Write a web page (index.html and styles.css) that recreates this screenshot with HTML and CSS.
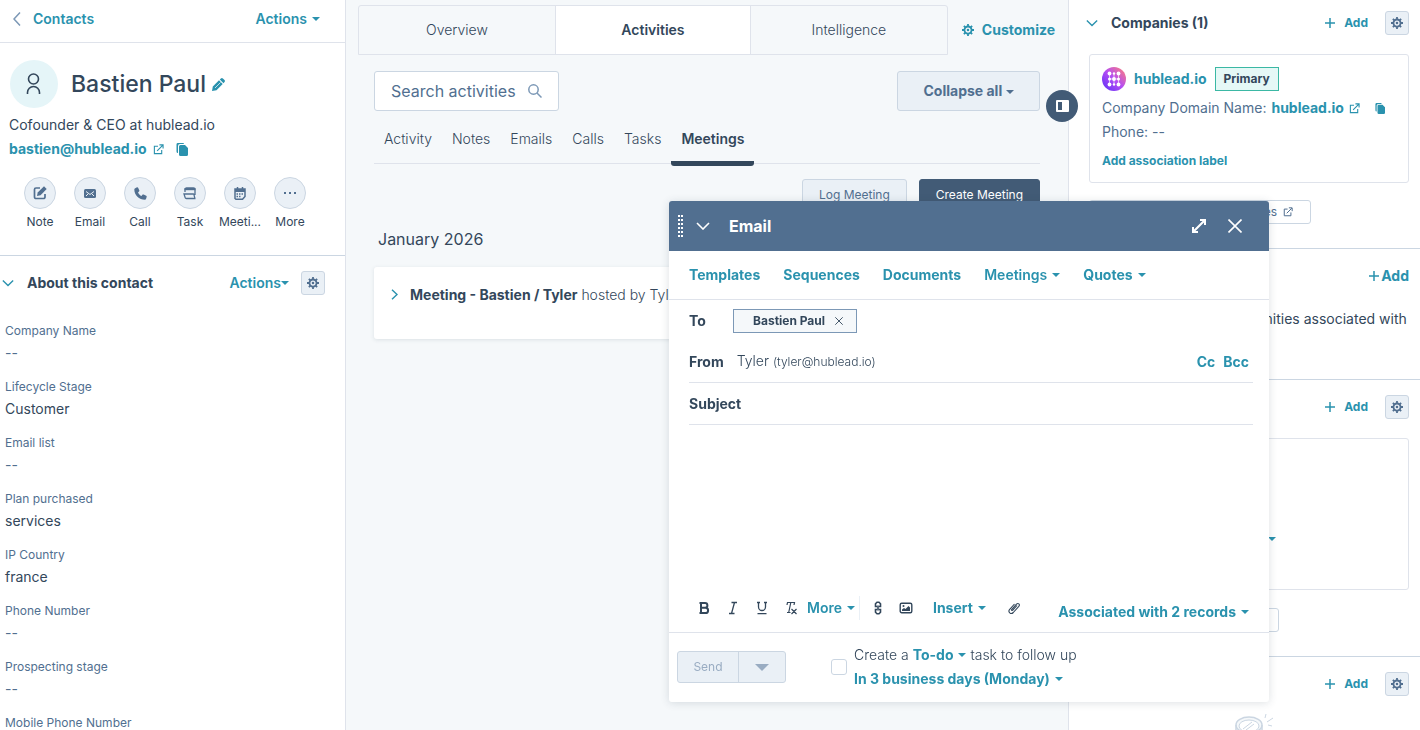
FILE: index.html
```html
<!DOCTYPE html>
<html lang="en">
<head>
  <meta charset="UTF-8">
  <meta name="viewport" content="width=device-width, initial-scale=1.0">
  <title>Bastien Paul</title>
  <link rel="stylesheet" href="styles.css">
</head>
<body>
  <!-- icons -->
  <svg class="sprite" aria-hidden="true">
    <symbol id="i-gear" viewBox="0 0 16 16">
      <path d="M8 0v4M8 12v4M0 8h4M12 8h4M2.500 2.500l2.600 2.600M10.900 10.900l2.600 2.600M13.500 2.500l-2.600 2.600M5.100 10.900l-2.600 2.600" stroke="currentColor" stroke-width="2.400"/>
      <circle cx="8" cy="8" r="4.700" fill="none" stroke="currentColor" stroke-width="2.400"/>
      <circle cx="8" cy="8" r="1.700" fill="currentColor"/>
    </symbol>
    <symbol id="i-down" viewBox="0 0 14 8"><path d="M1 1l6 6 6-6" fill="none" stroke="currentColor" stroke-width="1.6"/></symbol>
    <symbol id="i-ext" viewBox="0 0 12 12">
      <path d="M5.5 2.5H1.5v8h8v-4M4.5 7.5l6-6M7 1h4v4" fill="none" stroke="currentColor" stroke-width="1.2"/>
    </symbol>
    <symbol id="i-copy" viewBox="0 0 12 13">
      <path d="M1.5 0H7a1 1 0 0 1 1 1H4a2 2 0 0 0-2 2v7a1.500 1.500 0 0 1-1.500-1.500v-7A1.500 1.500 0 0 1 1.500 0z" fill="currentColor"/>
      <path d="M4.500 2H9l3 3v6.500a1.500 1.500 0 0 1-1.500 1.500h-6A1.500 1.500 0 0 1 3 11.500v-8A1.500 1.500 0 0 1 4.500 2z" fill="currentColor"/>
    </symbol>
    <symbol id="i-plus" viewBox="0 0 10 10"><path d="M5 0v10M0 5h10" stroke="currentColor" stroke-width="1.500"/></symbol>
    <symbol id="i-close" viewBox="0 0 14 14"><path d="M.5.5l13 13M13.500.5l-13 13" stroke="currentColor" stroke-width="1.600"/></symbol>
  </svg>

  <div class="page">
    <!-- left -->
    <aside class="left">
      <div class="left-top">
        <a href="#" class="back">
          <svg width="8" height="14" viewBox="0 0 8 14"><path d="M7 .5L1 7l6 6.500" fill="none" stroke="#7c98b6" stroke-width="1.500"/></svg>
          <span>Contacts</span>
        </a>
        <button class="link">Actions <i class="caret"></i></button>
      </div>
      <div class="profile">
        <div class="who">
          <span class="avatar">
            <svg width="16" height="22" viewBox="0 0 16 22" fill="none" stroke="#33475b" stroke-width="1.600"><circle cx="7.500" cy="6" r="5"/><path d="M1.500 21v-1.500a6 6 0 0 1 12 0V21"/></svg>
          </span>
          <h1>Bastien Paul</h1>
          <button class="plain edit" aria-label="Edit name">
            <svg width="13" height="13" viewBox="0 0 13 13"><path d="M0 13l.8-4.500L7 2.300l3.700 3.700L4.500 12.200zM7.800 1.500L8.900.5a1.500 1.500 0 0 1 2 0l1.600 1.600a1.500 1.500 0 0 1 0 2l-1 1.100z" fill="currentColor"/><path d="M3 10l5.500-5.500" stroke="#fff" stroke-width=".7"/></svg>
          </button>
        </div>
        <p class="role">Cofounder &amp; CEO at hublead.io</p>
        <p class="mail">
          <a href="mailto:bastien@hublead.io">bastien@hublead.io</a>
          <svg class="teal" width="11" height="11"><use href="#i-ext"/></svg>
          <button class="plain copy" aria-label="Copy email"><svg width="12" height="13"><use href="#i-copy"/></svg></button>
        </p>
        <ul class="quick">
          <li><button id="q-note"><svg width="14" height="14" viewBox="0 0 14 14"><path d="M7 2H3a1.500 1.500 0 0 0-1.500 1.500V11A1.500 1.500 0 0 0 3 12.500h7.500A1.500 1.500 0 0 0 12 11V8" fill="none" stroke="currentColor" stroke-width="1.700"/><path d="M4 10l.7-3.500L11 .3l2.700 2.700L7.500 9.300z" fill="currentColor"/></svg></button><label for="q-note">Note</label></li>
          <li><button id="q-email"><svg width="12" height="9" viewBox="0 0 12 9"><rect width="12" height="9" rx="1.500" fill="currentColor"/><path d="M2 2.500l4 3 4-3M2 7l2-2M10 7L8 5" fill="none" stroke="#eaf0f6"/></svg></button><label for="q-email">Email</label></li>
          <li><button id="q-call"><svg width="13" height="13" viewBox="0 0 13 13"><path d="M1.200 1.200L3 .3c.5-.2.900 0 1.100.4l1.200 2.600c.2.500.1.900-.3 1.200l-1 .9c.7 1.600 1.900 2.800 3.500 3.500l.9-1.100c.3-.4.700-.5 1.200-.3l2.600 1.200c.5.200.6.700.5 1.100l-.600 2c-.2.600-.6.900-1.200.9C5.200 12.700.3 7.800.3 2.400c0-.6.300-1 .9-1.200z" fill="currentColor"/></svg></button><label for="q-call">Call</label></li>
          <li><button id="q-task"><svg width="14" height="13" viewBox="0 0 14 13"><path d="M2 5V2.500A1.500 1.500 0 0 1 3.500 1h7A1.500 1.500 0 0 1 12 2.500V8M1 7h9.500c1 0 .5 4.500 2 4.500H3.500A1.500 1.500 0 0 1 2 10z" fill="none" stroke="currentColor" stroke-width="1.300"/><path d="M1.500 1h11v2.200h-11z" fill="currentColor"/></svg></button><label for="q-task">Task</label></li>
          <li><button id="q-meet"><svg width="12" height="13" viewBox="0 0 12 13"><path d="M3.500 0v3M8.500 0v3" stroke="currentColor" stroke-width="1.500"/><path d="M1 2h10v7.500L8.500 12.300H2L1 11.500z" fill="none" stroke="currentColor" stroke-width="1.500"/><path d="M1 2h10v3H1z" fill="currentColor"/><path d="M2.500 7h7M2.500 9.500H7" stroke="currentColor" stroke-width="1.500" stroke-dasharray="1.500 1"/></svg></button><label for="q-meet">Meeti...</label></li>
          <li><button id="q-more"><svg width="12" height="2" viewBox="0 0 12 2"><path d="M0 0h2v2H0zM5 0h2v2H5zM10 0h2v2h-2z" fill="currentColor"/></svg></button><label for="q-more">More</label></li>
        </ul>
      </div>
      <section class="about">
        <div class="about-head">
          <svg class="teal" width="12" height="8"><use href="#i-down"/></svg>
          <h2>About this contact</h2>
          <button class="link tight">Actions<i class="caret"></i></button>
          <button class="gear" aria-label="Settings"><svg width="12" height="12"><use href="#i-gear"/></svg></button>
        </div>
        <dl>
          <dt>Company Name</dt><dd class="none">--</dd>
          <dt>Lifecycle Stage</dt><dd>Customer</dd>
          <dt>Email list</dt><dd class="none">--</dd>
          <dt>Plan purchased</dt><dd>services</dd>
          <dt>IP Country</dt><dd>france</dd>
          <dt>Phone Number</dt><dd class="none">--</dd>
          <dt>Prospecting stage</dt><dd class="none">--</dd>
          <dt>Mobile Phone Number</dt>
        </dl>
      </section>
    </aside>

    <!-- middle -->
    <main class="middle">
      <div class="tabs-row">
        <nav class="tabs">
          <a href="#">Overview</a>
          <a href="#" class="on">Activities</a>
          <a href="#">Intelligence</a>
        </nav>
        <button class="link customize"><svg width="12" height="12"><use href="#i-gear"/></svg>Customize</button>
      </div>
      <div class="feed">
        <div class="tools">
          <div class="search">
            <input type="text" aria-label="Search activities" placeholder="Search activities">
            <svg width="14" height="14" viewBox="0 0 14 14" fill="none" stroke="#7c98b6" stroke-width="1.500"><circle cx="5.500" cy="5.500" r="4.700"/><path d="M9 9l4.500 4.500"/></svg>
          </div>
          <button class="collapse">Collapse all <i class="caret"></i></button>
        </div>
        <nav class="kinds">
          <a href="#">Activity</a>
          <a href="#">Notes</a>
          <a href="#">Emails</a>
          <a href="#">Calls</a>
          <a href="#">Tasks</a>
          <a href="#" class="on">Meetings</a>
        </nav>
        <div class="meet-btns">
          <button class="log">Log Meeting</button>
          <button class="create">Create Meeting</button>
        </div>
        <h3>January 2026</h3>
        <article class="meeting">
          <svg width="7" height="11" viewBox="0 0 7 11"><path d="M1 .7l5 4.800-5 4.800" fill="none" stroke="#2a92ae" stroke-width="1.400"/></svg>
          <p><b>Meeting - Bastien / Tyler</b> hosted by Tyler</p>
        </article>
      </div>
    </main>

    <!-- right -->
    <aside class="right">
      <button class="toggle" aria-label="Toggle sidebar"><svg width="13" height="12" viewBox="0 0 13 12"><rect width="13" height="12" rx="1" fill="#fff"/><path d="M2 2h4v8H2z" fill="#425b76"/></svg></button>
      <section class="assoc">
        <div class="assoc-head">
          <svg class="teal" width="12" height="8"><use href="#i-down"/></svg>
          <h2>Companies (1)</h2>
          <button class="link add"><svg width="10" height="10"><use href="#i-plus"/></svg>Add</button>
          <button class="gear" aria-label="Settings"><svg width="12" height="12"><use href="#i-gear"/></svg></button>
        </div>
        <div class="card">
          <div class="company">
            <svg width="24" height="24" viewBox="0 0 24 24">
              <defs><linearGradient id="g" x1="0" y1="1" x2="1" y2="0"><stop offset=".1" stop-color="#6a35f5"/><stop offset=".5" stop-color="#b44df5"/><stop offset=".9" stop-color="#f5788c"/></linearGradient></defs>
              <circle cx="12" cy="12" r="12" fill="url(#g)"/>
              <path d="M7.500 6.500v11M12 6.500v11M16.500 6.500v11M7.500 12h9" stroke="#fff" stroke-opacity=".8" stroke-width=".8"/>
              <g fill="#fff"><circle cx="7.500" cy="6.500" r="1.900"/><circle cx="12" cy="6.500" r="1.200"/><circle cx="16.500" cy="6.500" r="1.900"/><circle cx="7.500" cy="12" r="1.500"/><circle cx="12" cy="12" r="1.900"/><circle cx="16.500" cy="12" r="1.500"/><circle cx="7.500" cy="17.500" r="1.900"/><circle cx="12" cy="17.500" r="1.200"/><circle cx="16.500" cy="17.500" r="1.900"/></g>
            </svg>
            <a href="#">hublead.io</a>
            <span class="tag">Primary</span>
          </div>
          <p class="domain">Company Domain Name: <a href="#">hublead.io</a>
            <svg class="teal" width="11" height="11"><use href="#i-ext"/></svg>
            <button class="plain" aria-label="Copy domain"><svg width="10" height="11"><use href="#i-copy"/></svg></button>
          </p>
          <p>Phone: --</p>
          <a href="#" class="label-link">Add association label</a>
        </div>
        <button class="view">View associated Companies <svg width="10" height="10"><use href="#i-ext"/></svg></button>
      </section>
      <section class="assoc" aria-label="Deals">
        <div class="assoc-head">
          <button class="link add-big"><svg width="10" height="10"><use href="#i-plus"/></svg>Add</button>
        </div>
        <p class="empty">Track the revenue opportunities associated with this record.</p>
      </section>
      <section class="assoc" aria-label="Tickets">
        <div class="assoc-head">
          <button class="link add"><svg width="10" height="10"><use href="#i-plus"/></svg>Add</button>
          <button class="gear" aria-label="Settings"><svg width="12" height="12"><use href="#i-gear"/></svg></button>
        </div>
        <div class="card ticket">
          <button class="link" aria-label="Status"><i class="caret"></i></button>
        </div>
        <button class="view short" aria-label="View associated Tickets"></button>
      </section>
      <section class="assoc" aria-label="Attachments">
        <div class="assoc-head">
          <button class="link add"><svg width="10" height="10"><use href="#i-plus"/></svg>Add</button>
          <button class="gear" aria-label="Settings"><svg width="12" height="12"><use href="#i-gear"/></svg></button>
        </div>
        <svg class="drum" width="40" height="30" viewBox="0 0 40 30" fill="none" stroke="#cbd6e2" stroke-width="1.500">
          <ellipse cx="14" cy="11" rx="13" ry="8" fill="#f5f8fa"/><ellipse cx="14" cy="12" rx="10" ry="6" fill="#fff" stroke-width="1"/>
          <path d="M1 11v19M27 11v19"/><path d="M8 15l9-7M11 16l8-6" stroke-width="1"/>
          <path d="M30 4l1-4M32 8l6-4M33 11l4 1" stroke-width="1"/>
        </svg>
      </section>
    </aside>
  </div>

  <!-- email window -->
  <form class="email">
    <header>
      <svg class="grip" width="5" height="22" viewBox="0 0 5 22"><path d="M1 0v22M4 0v22" stroke="#fff" stroke-width="2" stroke-dasharray="2"/></svg>
      <button type="button" class="plain" aria-label="Minimize"><svg width="14" height="8"><use href="#i-down"/></svg></button>
      <h2>Email</h2>
      <button type="button" class="plain" aria-label="Expand"><svg width="14" height="14" viewBox="0 0 14 14"><path d="M8 0h6v6h-2V3.500L3.500 12H6v2H0V8h2v2.500L10.500 2H8z" fill="#fff"/></svg></button>
      <button type="button" class="plain" aria-label="Close"><svg width="14" height="14"><use href="#i-close"/></svg></button>
    </header>
    <div class="email-tabs">
      <button type="button" class="link">Templates</button>
      <button type="button" class="link">Sequences</button>
      <button type="button" class="link">Documents</button>
      <button type="button" class="link mid">Meetings <i class="caret"></i></button>
      <button type="button" class="link">Quotes <i class="caret"></i></button>
    </div>
    <div class="fields">
      <div class="field to"><b>To</b><span class="chip">Bastien Paul <button type="button" class="plain" aria-label="Remove"><svg width="8" height="8"><use href="#i-close"/></svg></button></span></div>
      <div class="field lined"><b>From</b><span class="from">Tyler <small>(tyler@hublead.io)</small></span><button type="button" class="link cc">Cc</button><button type="button" class="link">Bcc</button></div>
      <div class="field lined"><label for="subject">Subject</label><input type="text" id="subject"></div>
      <textarea aria-label="Message"></textarea>
    </div>
    <div class="format">
      <button type="button" class="plain fmt" aria-label="Bold"><svg width="14" height="14" viewBox="0 0 14 14"><path d="M4 2h4a2.300 2.300 0 0 1 0 4.800H4zM4 6.800h4.500a2.500 2.500 0 0 1 0 5.200H4zM2.500 2H5M2.500 12H5" fill="none" stroke="currentColor" stroke-width="2"/></svg></button>
      <button type="button" class="plain fmt" aria-label="Italic"><svg width="14" height="14" viewBox="0 0 14 14"><path d="M5.500 1.500H11M3 12.500h5.500M8.500 1.500l-3 11" fill="none" stroke="currentColor" stroke-width="1.300"/></svg></button>
      <button type="button" class="plain fmt" aria-label="Underline"><svg width="14" height="14" viewBox="0 0 14 14"><path d="M2 1.500h3M9 1.500h3M3.500 1.500V6a3.500 3.500 0 0 0 7 0V1.500M2.500 12.700h9" fill="none" stroke="currentColor" stroke-width="1.300"/></svg></button>
      <button type="button" class="plain fmt" aria-label="Clear formatting"><svg width="14" height="14" viewBox="0 0 14 14"><path d="M3 4l.5-2.500h7L10 4M6.800 1.500l-2 9.500M3 11.500h3.500M7.500 8l5 5M12.500 8l-5 5" fill="none" stroke="currentColor" stroke-width="1.200"/></svg></button>
      <button type="button" class="link more">More <i class="caret"></i></button>
      <button type="button" class="plain fmt chain" aria-label="Link"><svg width="14" height="14" viewBox="0 0 14 14" fill="none" stroke="currentColor" stroke-width="1.600"><path d="M6 5.500H4.500V2.800L6 1.300h2l1.500 1.500v2.700H8M6 8.500H4.500v2.700L6 12.700h2l1.500-1.500V8.500H8M7 4.500v5"/></svg></button>
      <button type="button" class="plain fmt" aria-label="Image"><svg width="14" height="14" viewBox="0 0 14 14"><rect x="1.200" y="2.200" width="11.600" height="9.600" rx="1.500" fill="none" stroke="currentColor" stroke-width="1.400"/><path d="M3 10V8.500L5 7l1.500 1L9.500 5 11 6.500V10z" fill="currentColor"/><circle cx="4.500" cy="5" r="1" fill="currentColor"/></svg></button>
      <button type="button" class="link insert">Insert <i class="caret"></i></button>
      <button type="button" class="plain fmt" aria-label="Attach"><svg width="14" height="14" viewBox="0 0 14 14"><path d="M10 4.500L5.800 9.200c-.7.800-1.700-.1-1-.9l4.700-5.100c1.600-1.700 3.900.3 2.300 2.200l-5.500 6.100c-2.400 2.500-5.800-.6-3.600-3.200L7.500 3" fill="none" stroke="currentColor" stroke-width="1.100"/></svg></button>
      <button type="button" class="link records">Associated with 2 records <i class="caret"></i></button>
    </div>
    <footer>
      <div class="send">
        <button type="submit" disabled>Send</button>
        <button type="button" disabled aria-label="Send options"><i class="caret big"></i></button>
      </div>
      <input type="checkbox" id="todo">
      <div class="follow">
        <div><label for="todo">Create a</label> <button type="button" class="link">To-do <i class="caret"></i></button> task to follow up</div>
        <div><button type="button" class="link">In 3 business days (Monday) <i class="caret"></i></button></div>
      </div>
    </footer>
  </form>
</body>
</html>
```
FILE: styles.css
```css
*{box-sizing:border-box;}
body,h1,h2,h3,p,ul,dl,dd{margin:0;padding:0;}
ul{list-style:none;}
a{text-decoration:none;color:#2a92ae;font-weight:700;}
svg{display:block;flex:none;}
body,button,input,textarea{
  font: 14px/24px Inter, "Liberation Sans", sans-serif;
  color: #33475b;
}
button{padding:0;border:0;background:none;cursor:pointer;}
input,textarea{border:0;outline:none;background:none;min-width:0;}
.sprite {
  display: none;
}
.teal,
.plain {
  color: #2a92ae;
}
.link {
  display: inline-flex;
  align-items: center;
  gap: 5px;
  color: #2a92ae;
  font-weight: 700;
  white-space: nowrap;
}
.link.tight {
  gap: 0;
  font-weight: 600;
}
.left-top .link,
.left-top a {
  font-weight: 600;
}
.caret {
  display: inline-block;
  border: 4px solid transparent;
  border-top-color: currentColor;
  border-bottom: 0;
}
.caret.big {
  border-width: 7px;
  border-bottom: 0;
}
.gear {
  display: flex;
  align-items: center;
  justify-content: center;
  width: 24px;
  height: 24px;
  border: 1px solid #cbd6e2;
  border-radius: 3px;
  background: #eaf0f6;
  color: #516f90;
}
.page {
  display: flex;
  height: 100vh;
  overflow: hidden;
  background: #f5f8fa;
}

/* left */
.left {
  flex: none;
  width: 346px;
  overflow: hidden;
  background: #fff;
  border-right: 1px solid #dfe3eb;
}
.left-top {
  display: flex;
  justify-content: space-between;
  padding: 7px 25px 11px 13px;
  border-bottom: 1px solid #dfe3eb;
}
.back {
  display: flex;
  align-items: center;
  gap: 12px;
}
.profile {
  padding: 17px 9px 24px;
  border-bottom: 1px solid #cbd6e2;
}
.who {
  display: flex;
  align-items: center;
  margin-bottom: 5px;
}
.avatar {
  display: flex;
  align-items: center;
  justify-content: center;
  width: 48px;
  height: 48px;
  margin: 0 13px 0 1px;
  border-radius: 50%;
  background: #e5f5f8;
}
.who h1 {
  font-size: 23px;
  font-weight: 500;
}
.edit {
  margin-left: 6px;
}
.mail {
  display: flex;
  align-items: center;
  gap: 6px;
}
.copy {
  margin-left: 6px;
}
.quick {
  display: flex;
  padding: 16px 6px 0;
}
.quick li {
  display: flex;
  flex-direction: column;
  align-items: center;
  gap: 4px;
  width: 50px;
}
.quick button {
  display: flex;
  align-items: center;
  justify-content: center;
  width: 32px;
  height: 32px;
  border: 1px solid #cbd6e2;
  border-radius: 50%;
  background: #eaf0f6;
  color: #516f90;
}
.quick label {
  font-size: 12px;
  line-height: 18px;
}
.about-head {
  display: flex;
  align-items: center;
  padding: 15px 20px 24px 2px;
}
.about-head h2,
.assoc-head h2 {
  flex: 1;
  margin-left: 13px;
  font-size: 14px;
  font-weight: 700;
}
.about-head .gear {
  margin-left: 12px;
}
.about dl {
  padding: 2px 5px;
}
.about dt {
  color: #516f90;
  font-size: 12px;
  line-height: 20px;
}
.about dd {
  margin-bottom: 12px;
}
.about dd.none {
  color: #516f90;
}

/* middle */
.middle {
  flex: 1;
  min-width: 0;
}
.tabs-row {
  display: flex;
  gap: 14px;
  padding: 5px 13px 0 12px;
}
.tabs {
  flex: 1;
  display: grid;
  grid-template-columns: repeat(3, 1fr);
  border: 1px solid #dfe3eb;
  border-radius: 3px 3px 0 0;
}
.tabs a {
  height: 48px;
  line-height: 48px;
  text-align: center;
  color: #33475b;
  font-weight: 300;
}
.tabs a.on {
  background: #fff;
  border: 1px solid #dfe3eb;
  border-width: 0 1px;
  font-weight: 600;
}
.customize {
  gap: 8px;
}
.feed {
  padding: 16px 28px;
}
.tools {
  display: flex;
  justify-content: space-between;
}
.search {
  display: flex;
  align-items: center;
  gap: 12px;
  width: 185px;
  height: 40px;
  padding: 0 16px;
  border: 1px solid #cbd6e2;
  border-radius: 3px;
  background: #fff;
}
.search input {
  flex: 1;
  padding: 0;
  font-size: 16px;
}
.search input::placeholder {
  color: #516f90;
}
.collapse {
  width: 143px;
  border: 1px solid #cbd6e2;
  border-radius: 3px;
  background: #eaf0f6;
  color: #516f90;
  font-weight: 700;
}
.collapse .caret {
  vertical-align: middle;
}
.kinds {
  display: flex;
  height: 53px;
  border-bottom: 1px solid #dfe3eb;
}
.kinds a {
  height: 55px;
  padding: 16px 10px 0;
  color: #33475b;
  font-weight: 300;
}
.kinds a.on {
  font-weight: 600;
  border-bottom: 5px solid #33475b;
  border-radius: 3px;
}
.meet-btns {
  display: flex;
  justify-content: flex-end;
  gap: 12px;
  padding-top: 15px;
}
.meet-btns button {
  height: 32px;
  padding: 0 16px;
  border: 1px solid #cbd6e2;
  border-radius: 3px;
  background: #eaf0f6;
  color: #516f90;
  font-size: 12px;
}
.meet-btns .create {
  border-color: #425b76;
  background: #425b76;
  color: #fff;
}
.feed h3 {
  margin: 16px 4px;
  font-size: 16px;
  font-weight: 400;
}
.meeting {
  display: flex;
  gap: 12px;
  height: 72px;
  padding: 16px 17px;
  border-radius: 3px;
  background: #fff;
  box-shadow: 0 1px 4px rgba(45, 62, 80, .12);
}
.meeting svg {
  margin-top: 6px;
}
.meeting p {
  font-weight: 300;
}
.meeting b {
  font-weight: 700;
}
.email b,
.email label[for=subject] {
  font-weight: 700;
}

/* right */
.right {
  position: relative;
  flex: none;
  width: 352px;
  background: #fff;
  border-left: 1px solid #dfe3eb;
}
.toggle {
  position: absolute;
  top: 90px;
  left: -23px;
  display: flex;
  align-items: center;
  justify-content: center;
  width: 32px;
  height: 32px;
  border-radius: 50%;
  background: #425b76;
}
.assoc {
  padding: 11px 11px 24px 20px;
  border-bottom: 1px solid #cbd6e2;
}
.assoc + .assoc {
  padding-top: 15px;
}
.assoc-head {
  display: flex;
  align-items: center;
  justify-content: flex-end;
  height: 24px;
  margin: 0 0 19px -3px;
}
.assoc .add {
  gap: 9px;
  margin-right: 17px;
  font-size: 12px;
}
.assoc .add-big {
  gap: 2px;
}
.card {
  margin-bottom: 17px;
  padding: 12px 12px 11px;
  border: 1px solid #dfe3eb;
  border-radius: 3px;
  color: #516f90;
}
.company {
  display: flex;
  align-items: center;
  gap: 8px;
  margin-bottom: 5px;
}
.company .tag {
  padding: 2px 8px;
  border: 1px solid #3bb8a4;
  background: #e5f8f6;
  color: #33475b;
  font-size: 12px;
  font-weight: 700;
  line-height: 18px;
}
.domain {
  display: flex;
  align-items: center;
  gap: 5px;
  white-space: nowrap;
}
.domain .plain {
  margin-left: 10px;
}
.label-link {
  display: block;
  margin-top: 7px;
  font-size: 12px;
  line-height: 20px;
}
.view {
  display: flex;
  align-items: center;
  justify-content: flex-end;
  gap: 6px;
  width: 222px;
  height: 24px;
  padding: 0 17px;
  border: 1px solid #cbd6e2;
  border-radius: 3px;
  color: #516f90;
  font-size: 12px;
}
.view.short {
  width: 190px;
}
.ticket {
  display: flex;
  align-items: center;
  justify-content: center;
  height: 152px;
  margin-bottom: 18px;
  padding: 50px 0 0 46px;
}
.drum {
  margin: -1px 0 0 146px;
}

/* email window */
.email {
  position: fixed;
  right: 151px;
  bottom: 28px;
  display: flex;
  flex-direction: column;
  width: 600px;
  height: 501px;
  border-radius: 3px;
  background: #fff;
  box-shadow: 0 1px 8px rgba(45, 62, 80, .16);
}
.email header {
  display: flex;
  align-items: center;
  height: 50px;
  padding: 0 27px 0 9px;
  border-radius: 3px 3px 0 0;
  background: #516f90;
  color: #fff;
}
.email header .plain {
  color: #fff;
}
.grip {
  margin-right: 13px;
}
.email header h2 {
  flex: 1;
  margin-left: 19px;
  font-size: 16px;
  font-weight: 700;
}
.email header h2 ~ .plain + .plain {
  margin-left: 22px;
}
.email-tabs {
  display: flex;
  gap: 23px;
  padding: 12px 20px;
  border-bottom: 1px solid #dfe3eb;
}
.email-tabs .mid {
  font-weight: 600;
}
.fields {
  flex: 1;
  display: flex;
  flex-direction: column;
  padding: 0 16px 0 20px;
}
.field {
  display: flex;
  align-items: center;
  height: 42px;
}
.field.lined {
  border-bottom: 1px solid #dfe3eb;
}
.field.to {
  height: 41px;
}
.field.to b {
  width: 44px;
}
.chip {
  display: flex;
  align-items: center;
  gap: 10px;
  height: 24px;
  padding: 0 13px 0 19px;
  border: 1px solid #7c98b6;
  background: #f5f8fa;
  font-size: 12px;
  font-weight: 700;
}
.chip .plain {
  color: #33475b;
}
.from {
  flex: 1;
  margin-left: 13px;
  font-weight: 300;
}
.from small {
  font-size: 12px;
}
.cc {
  margin-right: 8px;
}
.field .link:last-child {
  margin-right: 4px;
}
.field input {
  flex: 1;
}
.fields textarea {
  flex: 1;
  resize: none;
}
.format {
  display: flex;
  align-items: center;
  height: 50px;
  padding: 0 20px 0 28px;
  border-bottom: 1px solid #dfe3eb;
}
.format .fmt {
  margin-right: 15px;
  color: #33475b;
}
.format .more {
  margin-left: -6px;
  padding-right: 4px;
  border-right: 1px solid #eaf0f6;
  font-weight: 600;
}
.format .chain {
  margin: 0 14px 0 11px;
}
.format .insert {
  margin: 0 21px 0 5px;
}
.format .records {
  margin: 8px 0 0 auto;
}
.email footer {
  display: flex;
  align-items: center;
  height: 69px;
  padding: 0 8px 1px;
}
.send {
  display: flex;
  width: 109px;
  height: 32px;
  border: 1px solid #cbd6e2;
  border-radius: 3px;
  background: #eaf0f6;
}
.send button {
  flex: 1;
  color: #99acc2;
  font-size: 12px;
}
.send button:first-child {
  flex: none;
  width: 61px;
  border-right: 1px solid #cbd6e2;
}
.send .caret {
  vertical-align: middle;
}
.email footer input {
  appearance: none;
  width: 16px;
  height: 16px;
  margin: 0 7px 0 45px;
  border: 1px solid #cbd6e2;
  border-radius: 3px;
}
.follow {
  font-weight: 300;
}
```
